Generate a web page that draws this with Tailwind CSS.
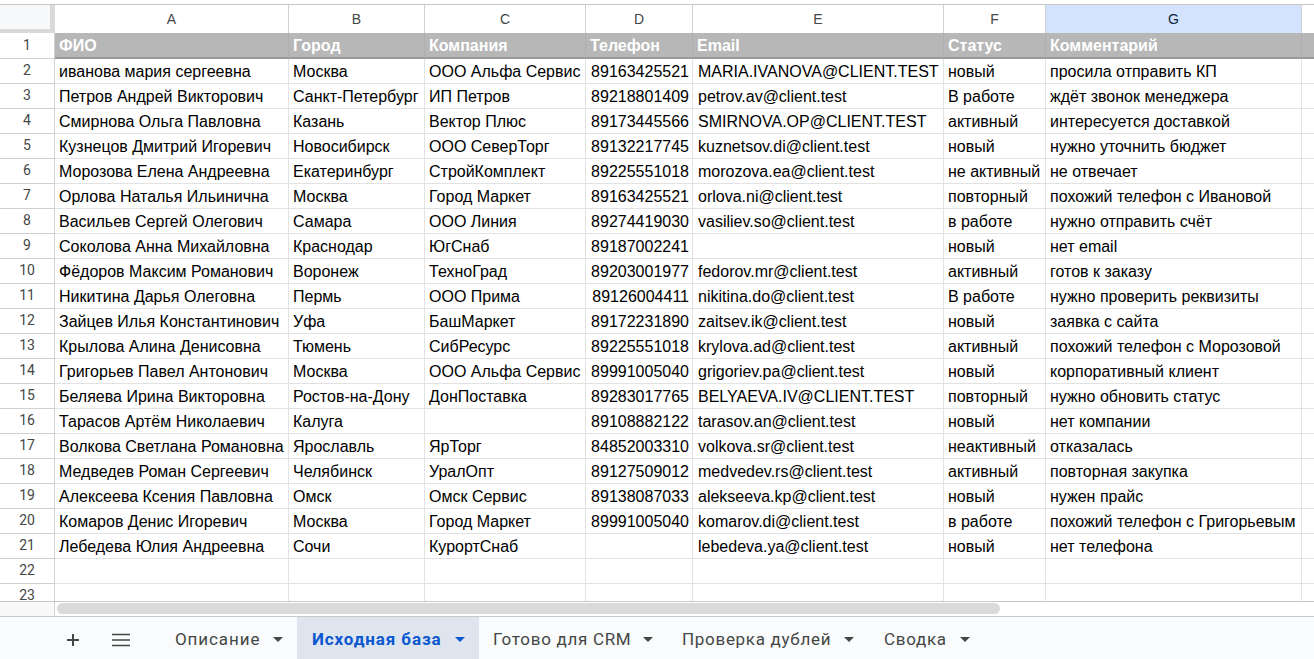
<!DOCTYPE html>
<html lang="ru">

<head>
  <meta charset="UTF-8" />
  <meta name="viewport" content="width=device-width, initial-scale=1.0" />
  <script src="https://cdn.jsdelivr.net/npm/@tailwindcss/browser@4"></script>
  <title>Исходная база</title>
</head>

<body class="bg-white overflow-hidden">
  <div class="h-[659px] flex flex-col font-['Liberation_Sans',sans-serif]">
    <div class="h-[4px] shrink-0"></div>

    <div class="h-[597px] shrink-0 overflow-hidden border-t border-[#c7c7c7]">
      <table class="table-fixed border-separate border-spacing-0 w-[1314px]">
        <colgroup>
          <col class="w-[55px]" />
          <col class="w-[234px]" />
          <col class="w-[136px]" />
          <col class="w-[161px]" />
          <col class="w-[107px]" />
          <col class="w-[251px]" />
          <col class="w-[102px]" />
          <col class="w-[256px]" />
          <col />
        </colgroup>
        <thead>
          <tr id="letters" class="h-[28px]"></tr>
        </thead>
        <tbody id="rows"></tbody>
      </table>
    </div>

    <!-- horizontal scrollbar -->
    <div class="h-[15px] shrink-0 flex border-t border-[#c7c7c7]">
      <div class="w-[55px] shrink-0 bg-[#f9f9f9] border-r border-[#d0d0d0]"></div>
      <div class="w-[943px] h-[11px] ml-[2px] mt-[1px] rounded-full bg-[#dadada]"></div>
    </div>

    <!-- sheet tabs -->
    <div class="flex-1 flex items-stretch bg-[#f9fbfd] border-t border-[#c7c7c7] font-['Roboto',sans-serif] text-[17px] font-normal tracking-[0.9px] text-[#444746]">
      <div class="w-[160px] shrink-0 flex items-center">
        <svg class="ml-[65px] mt-[3px]" width="16" height="16" viewBox="0 0 16 16" fill="none" stroke="#444746" stroke-width="2">
          <path d="M8 2v12M2 8h12" />
        </svg>
        <svg class="ml-[31px] mt-[3px]" width="18" height="16" viewBox="0 0 18 16" fill="none" stroke="#444746" stroke-width="1.6">
          <path d="M0 2.5h18M0 8h18M0 13.5h18" />
        </svg>
      </div>
      <div class="w-[137px] shrink-0 pl-[15px] pt-[4px] flex items-center">Описание<svg class="ml-[13px] mb-[1px]" width="10" height="5" viewBox="0 0 10 5" fill="#444746"><path d="M0 0h10L5 5z" /></svg></div>
      <div class="w-[182px] shrink-0 pl-[15px] pt-[4px] flex items-center bg-[#dfe5ee] text-[#0b57d0] font-bold">Исходная база<svg class="ml-[13px] mb-[1px]" width="10" height="5" viewBox="0 0 10 5" fill="#0b57d0"><path d="M0 0h10L5 5z" /></svg></div>
      <div class="w-[189px] shrink-0 pl-[14px] pt-[4px] flex items-center tracking-[0.7px]">Готово для CRM<svg class="ml-[12px] mb-[1px]" width="10" height="5" viewBox="0 0 10 5" fill="#444746"><path d="M0 0h10L5 5z" /></svg></div>
      <div class="w-[202px] shrink-0 pl-[14px] pt-[4px] flex items-center tracking-[0.7px]">Проверка дублей<svg class="ml-[13px] mb-[1px]" width="10" height="5" viewBox="0 0 10 5" fill="#444746"><path d="M0 0h10L5 5z" /></svg></div>
      <div class="w-[115px] shrink-0 pl-[14px] pt-[4px] flex items-center tracking-[0.7px]">Сводка<svg class="ml-[13px] mb-[1px]" width="10" height="5" viewBox="0 0 10 5" fill="#444746"><path d="M0 0h10L5 5z" /></svg></div>
    </div>
  </div>

  <script>
    const header = ["ФИО", "Город", "Компания", "Телефон", "Email", "Статус", "Комментарий"];
    const data = [
      ["иванова мария сергеевна", "Москва", "ООО Альфа Сервис", "89163425521", "MARIA.IVANOVA@CLIENT.TEST", "новый", "просила отправить КП"],
      ["Петров Андрей Викторович", "Санкт-Петербург", "ИП Петров", "89218801409", "petrov.av@client.test", "В работе", "ждёт звонок менеджера"],
      ["Смирнова Ольга Павловна", "Казань", "Вектор Плюс", "89173445566", "SMIRNOVA.OP@CLIENT.TEST", "активный", "интересуется доставкой"],
      ["Кузнецов Дмитрий Игоревич", "Новосибирск", "ООО СеверТорг", "89132217745", "kuznetsov.di@client.test", "новый", "нужно уточнить бюджет"],
      ["Морозова Елена Андреевна", "Екатеринбург", "СтройКомплект", "89225551018", "morozova.ea@client.test", "не активный", "не отвечает"],
      ["Орлова Наталья Ильинична", "Москва", "Город Маркет", "89163425521", "orlova.ni@client.test", "повторный", "похожий телефон с Ивановой"],
      ["Васильев Сергей Олегович", "Самара", "ООО Линия", "89274419030", "vasiliev.so@client.test", "в работе", "нужно отправить счёт"],
      ["Соколова Анна Михайловна", "Краснодар", "ЮгСнаб", "89187002241", "", "новый", "нет email"],
      ["Фёдоров Максим Романович", "Воронеж", "ТехноГрад", "89203001977", "fedorov.mr@client.test", "активный", "готов к заказу"],
      ["Никитина Дарья Олеговна", "Пермь", "ООО Прима", "89126004411", "nikitina.do@client.test", "В работе", "нужно проверить реквизиты"],
      ["Зайцев Илья Константинович", "Уфа", "БашМаркет", "89172231890", "zaitsev.ik@client.test", "новый", "заявка с сайта"],
      ["Крылова Алина Денисовна", "Тюмень", "СибРесурс", "89225551018", "krylova.ad@client.test", "активный", "похожий телефон с Морозовой"],
      ["Григорьев Павел Антонович", "Москва", "ООО Альфа Сервис", "89991005040", "grigoriev.pa@client.test", "новый", "корпоративный клиент"],
      ["Беляева Ирина Викторовна", "Ростов-на-Дону", "ДонПоставка", "89283017765", "BELYAEVA.IV@CLIENT.TEST", "повторный", "нужно обновить статус"],
      ["Тарасов Артём Николаевич", "Калуга", "", "89108882122", "tarasov.an@client.test", "новый", "нет компании"],
      ["Волкова Светлана Романовна", "Ярославль", "ЯрТорг", "84852003310", "volkova.sr@client.test", "неактивный", "отказалась"],
      ["Медведев Роман Сергеевич", "Челябинск", "УралОпт", "89127509012", "medvedev.rs@client.test", "активный", "повторная закупка"],
      ["Алексеева Ксения Павловна", "Омск", "Омск Сервис", "89138087033", "alekseeva.kp@client.test", "новый", "нужен прайс"],
      ["Комаров Денис Игоревич", "Москва", "Город Маркет", "89991005040", "komarov.di@client.test", "в работе", "похожий телефон с Григорьевым"],
      ["Лебедева Юлия Андреевна", "Сочи", "КурортСнаб", "", "lebedeva.ya@client.test", "новый", "нет телефона"],
      ["", "", "", "", "", "", ""],
      ["", "", "", "", "", "", ""]
    ];

    const rowHead = "p-0 pb-[2px] text-center text-[14px] text-[#444746] font-normal bg-white border-r border-b border-[#d0d0d0] font-['Roboto',sans-serif]";
    const firstHead = "p-0 text-center text-[14px] text-[#444746] font-normal bg-white border-r border-b border-[#d0d0d0] font-['Roboto',sans-serif]";
    const cell = "p-0 pl-[4px] pt-[2px] text-[16px] leading-[22px] text-black whitespace-nowrap overflow-hidden border-r border-b border-[#e2e2e2]";
    const headCell = "p-0 px-[4px] pt-[2px] text-[16px] leading-[22px] font-bold text-white whitespace-nowrap overflow-hidden bg-[#b7b7b7] border-r border-[#aeaeae] border-b-2 border-b-[#9a9a9a]";

    // Column letters
    let letters = `<th class="p-0 bg-[#f8f9fa] border-r-[5px] border-b-[4px] border-[#d9d9d9]"></th>`;
    ["A", "B", "C", "D", "E", "F", "G"].forEach(l => {
      const bg = l === "G" ? "bg-[#d3e3fd] text-[#0b1f3f]" : "bg-white text-[#444746]";
      letters += `<th class="p-0 text-center text-[14px] font-normal border-r border-[#d0d0d0] ${bg}">${l}</th>`;
    });
    letters += `<th class="p-0 bg-white"></th>`;
    document.getElementById("letters").innerHTML = letters;

    // Rows
    let html = `<tr class="h-[26px]"><td class="${firstHead}">1</td>`;
    header.forEach(h => { html += `<td class="${headCell}">${h}</td>`; });
    html += `<td class="p-0 bg-[#b7b7b7] border-b-2 border-b-[#9a9a9a]"></td></tr>`;
    data.forEach((row, i) => {
      html += `<tr class="h-[25px]"><td class="${rowHead}">${i + 2}</td>`;
      row.forEach((v, c) => {
        html += `<td class="${cell} ${c === 3 ? "text-right pr-[3px]" : "text-left pr-[4px]"} ${c === 4 ? "pl-[5px]" : ""}">${v}</td>`;
      });
      html += `<td class="p-0 border-b border-[#e2e2e2]"></td></tr>`;
    });
    document.getElementById("rows").innerHTML = html;
  </script>
</body>

</html>
